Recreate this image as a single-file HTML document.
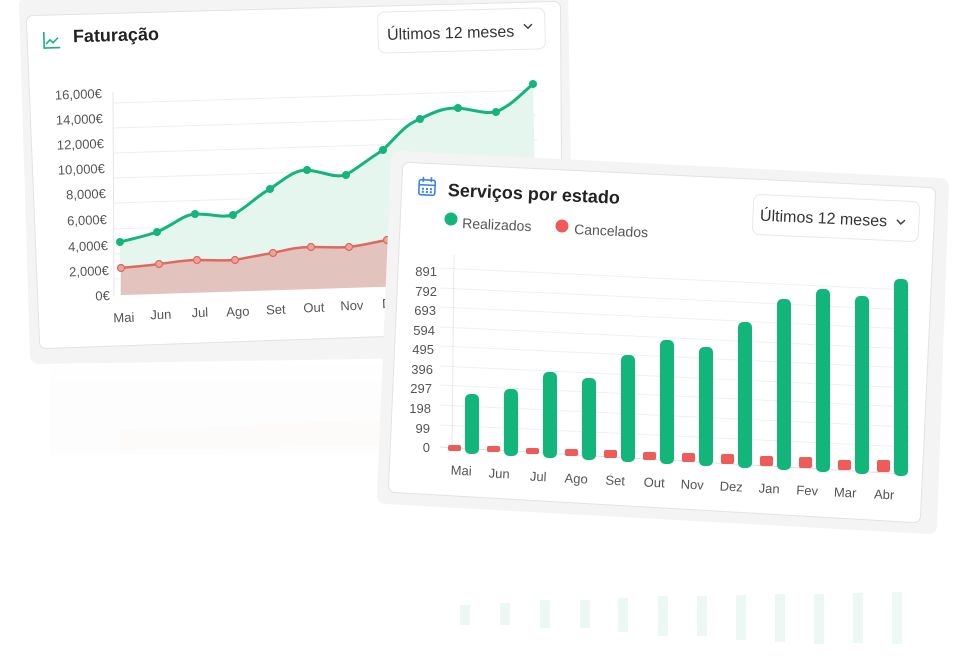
<!DOCTYPE html>
<html><head><meta charset="utf-8"><style>
html,body{margin:0;padding:0;background:#fff;width:957px;height:659px;overflow:hidden}
svg{display:block}
text{font-family:"Liberation Sans",sans-serif}
</style></head><body>
<svg width="957" height="659" viewBox="0 0 957 659" xmlns="http://www.w3.org/2000/svg">
<!-- reflections -->
<g opacity="0.08">
<rect x="50" y="365" width="340" height="90" fill="#eee"/>
<polygon points="120,430 390,420 390,445 120,450" fill="#e9c9c3"/>
<g fill="#12b57a">
<rect x="460" y="605" width="10" height="20"/><rect x="500" y="603" width="10" height="22"/>
<rect x="540" y="600" width="10" height="28"/><rect x="580" y="600" width="10" height="28"/>
<rect x="618" y="598" width="10" height="34"/><rect x="658" y="596" width="10" height="40"/>
<rect x="697" y="596" width="10" height="40"/><rect x="736" y="595" width="10" height="45"/>
<rect x="775" y="594" width="10" height="48"/><rect x="814" y="594" width="10" height="50"/>
<rect x="853" y="593" width="10" height="50"/><rect x="892" y="592" width="10" height="52"/>
</g>
</g>

<!-- Card 1 frame -->
<polygon points="27,5 560,-10 566,348 38,356" fill="#f4f4f4" stroke="#f4f4f4" stroke-width="16" stroke-linejoin="round"/>
<polygon points="33,22 554,8 556,324 46,342" fill="#fff" stroke="#e3e3e3" stroke-width="14" stroke-linejoin="round"/>
<polygon points="33,22 554,8 556,324 46,342" fill="#fff" stroke="#fff" stroke-width="12" stroke-linejoin="round"/>
<!-- title -->
<g transform="rotate(-1.5 44 40)">
<path d="M44 32 V48 H60 M46 44 l4 -4 l3 3 l5 -5" fill="none" stroke="#12b57a" stroke-width="1.6"/>
<text x="73" y="43" font-size="18" font-weight="bold" fill="#222">Faturação</text>
</g>
<!-- dropdown1 -->
<g transform="rotate(-1.5 460 30)">
<rect x="378" y="10" width="167" height="41" rx="7" fill="#fff" stroke="#e8e8e8"/>
<text x="387" y="38" font-size="16" fill="#333">Últimos 12 meses</text>
<path d="M524 26 l4 4 l4 -4" fill="none" stroke="#444" stroke-width="1.5"/>
</g>
<!-- gridlines -->
<g stroke="#eeeeee" stroke-width="1">
<line x1="113" y1="103" x2="537" y2="90"/>
<line x1="113" y1="128" x2="537" y2="115"/>
<line x1="113" y1="153" x2="537" y2="140"/>
<line x1="113" y1="178" x2="537" y2="165"/>
<line x1="113" y1="203" x2="537" y2="190"/>
<line x1="113" y1="229" x2="537" y2="216"/>
<line x1="113" y1="254" x2="537" y2="241"/>
<line x1="113" y1="279" x2="537" y2="266"/>
</g>
<line x1="113" y1="92" x2="114" y2="296" stroke="#e6e6e6"/>
<path d="M120,242 C140,237 145,236 157,232 C175,224 183,215 195,214 C215,214 222,218 233,215 C250,205 258,195 270,189 C287,177 295,170 307,170 C325,172 333,178 346,175 C362,165 370,158 383,150 C400,133 405,125 420,119 C438,110 445,108 458,108 C476,110 484,114 496,112 C512,105 520,95 533,84 L537,282 L120,295 Z" fill="#e5f6ee"/>
<path d="M121,268 L159,264 L197,260 L235,260 L273,253 L311,247 L349,247 L387,240 L420,236 L537,230 L537,282 L121,295 Z" fill="#e2c3bd"/>
<path d="M120,242 C140,237 145,236 157,232 C175,224 183,215 195,214 C215,214 222,218 233,215 C250,205 258,195 270,189 C287,177 295,170 307,170 C325,172 333,178 346,175 C362,165 370,158 383,150 C400,133 405,125 420,119 C438,110 445,108 458,108 C476,110 484,114 496,112 C512,105 520,95 533,84" fill="none" stroke="#12b57a" stroke-width="3"/>
<g fill="#12b57a">
<circle cx="120" cy="242" r="4"/><circle cx="157" cy="232" r="4"/><circle cx="195" cy="214" r="4"/><circle cx="233" cy="215" r="4"/><circle cx="270" cy="189" r="4"/><circle cx="307" cy="170" r="4"/><circle cx="346" cy="175" r="4"/><circle cx="383" cy="150" r="4"/><circle cx="420" cy="119" r="4"/><circle cx="458" cy="108" r="4"/><circle cx="496" cy="112" r="4"/><circle cx="533" cy="84" r="4"/>
</g>
<path d="M121,268 C140,266 145,266 159,264 C175,262 185,260 197,260 C215,260 222,261 235,260 C250,257 260,255 273,253 C290,249 298,247 311,247 C330,247 337,248 349,247 C365,245 375,242 387,240 L420,236" fill="none" stroke="#e0685e" stroke-width="2.5"/>
<g fill="#e9a49d" stroke="#e0685e" stroke-width="1.2">
<circle cx="121" cy="268" r="3.5"/><circle cx="159" cy="264" r="3.5"/><circle cx="197" cy="260" r="3.5"/><circle cx="235" cy="260" r="3.5"/><circle cx="273" cy="253" r="3.5"/><circle cx="311" cy="247" r="3.5"/><circle cx="349" cy="247" r="3.5"/><circle cx="387" cy="240" r="3.5"/>
</g>
<g font-size="13" fill="#555" text-anchor="end">
<text x="102" y="98" transform="rotate(-2 102 98)">16,000€</text>
<text x="103" y="123" transform="rotate(-2 103 123)">14,000€</text>
<text x="104" y="148" transform="rotate(-2 104 148)">12,000€</text>
<text x="105" y="173" transform="rotate(-2 105 173)">10,000€</text>
<text x="106" y="198" transform="rotate(-2 106 198)">8,000€</text>
<text x="107" y="224" transform="rotate(-2 107 224)">6,000€</text>
<text x="108" y="250" transform="rotate(-2 108 250)">4,000€</text>
<text x="109" y="275" transform="rotate(-2 109 275)">2,000€</text>
<text x="110" y="300" transform="rotate(-2 110 300)">0€</text>
</g>
<g font-size="13" fill="#555" text-anchor="middle">
<text x="124" y="322" transform="rotate(-2 124 322)">Mai</text>
<text x="161" y="319" transform="rotate(-2 161 319)">Jun</text>
<text x="200" y="317" transform="rotate(-2 200 317)">Jul</text>
<text x="238" y="316" transform="rotate(-2 238 316)">Ago</text>
<text x="276" y="314" transform="rotate(-2 276 314)">Set</text>
<text x="314" y="312" transform="rotate(-2 314 312)">Out</text>
<text x="352" y="310" transform="rotate(-2 352 310)">Nov</text>
<text x="387" y="308" transform="rotate(-2 387 308)">D</text>
</g>

<!-- Card 2 -->
<polygon points="399,159 941,186 929,526 385,496" fill="#f4f4f4" stroke="#f4f4f4" stroke-width="16" stroke-linejoin="round"/>
<polygon points="409,169 929,194 914,516 395,486" fill="#fff" stroke="#e3e3e3" stroke-width="14" stroke-linejoin="round"/>
<polygon points="409,169 929,194 914,516 395,486" fill="#fff" stroke="#fff" stroke-width="12" stroke-linejoin="round"/>
<g transform="rotate(2.6 427 188)">
<rect x="419" y="180" width="16" height="15" rx="2" fill="none" stroke="#3b82f6" stroke-width="1.6"/>
<line x1="419" y1="185" x2="435" y2="185" stroke="#3b82f6" stroke-width="1.6"/>
<line x1="423" y1="177" x2="423" y2="182" stroke="#3b82f6" stroke-width="1.6"/>
<line x1="431" y1="177" x2="431" y2="182" stroke="#3b82f6" stroke-width="1.6"/>
<g fill="#3b82f6"><rect x="422" y="188" width="2" height="2"/><rect x="426" y="188" width="2" height="2"/><rect x="430" y="188" width="2" height="2"/><rect x="422" y="191" width="2" height="2"/><rect x="426" y="191" width="2" height="2"/><rect x="430" y="191" width="2" height="2"/></g>
<text x="448" y="195" font-size="18" font-weight="bold" fill="#222">Serviços por estado</text>
</g>
<circle cx="451" cy="219" r="6.5" fill="#12b57a"/>
<text x="462" y="228" font-size="14" fill="#555" transform="rotate(2.6 462 228)">Realizados</text>
<circle cx="562" cy="226" r="6.5" fill="#ee5b59"/>
<text x="574" y="234" font-size="14" fill="#555" transform="rotate(2.6 574 234)">Cancelados</text>
<g transform="rotate(2.6 835 218)">
<rect x="753" y="198" width="166" height="40" rx="7" fill="#fff" stroke="#e8e8e8"/>
<text x="760" y="224" font-size="16" fill="#333">Últimos 12 meses</text>
<path d="M897 217 l4 4 l4 -4" fill="none" stroke="#444" stroke-width="1.5"/>
</g>
<g stroke="#f0f0f0">
<line x1="440" y1="268" x2="910" y2="290"/>
<line x1="440" y1="288" x2="910" y2="310"/>
<line x1="440" y1="307" x2="910" y2="329"/>
<line x1="440" y1="327" x2="910" y2="349"/>
<line x1="440" y1="346" x2="910" y2="368"/>
<line x1="440" y1="366" x2="910" y2="388"/>
<line x1="440" y1="385" x2="910" y2="407"/>
<line x1="440" y1="405" x2="910" y2="427"/>
<line x1="440" y1="425" x2="910" y2="447"/>
</g>
<line x1="454" y1="255" x2="452" y2="450" stroke="#e8e8e8"/>
<line x1="440" y1="447" x2="905" y2="474" stroke="#e0e0e0"/>
<g fill="#12b57a">
<rect x="465" y="394" width="14" height="60" rx="5"/>
<rect x="504" y="389" width="14" height="67" rx="5"/>
<rect x="543" y="372" width="14" height="86" rx="5"/>
<rect x="582" y="378" width="14" height="82" rx="5"/>
<rect x="621" y="355" width="14" height="107" rx="5"/>
<rect x="660" y="340" width="14" height="124" rx="5"/>
<rect x="699" y="347" width="14" height="119" rx="5"/>
<rect x="738" y="322" width="14" height="146" rx="5"/>
<rect x="777" y="299" width="14" height="171" rx="5"/>
<rect x="816" y="289" width="14" height="183" rx="5"/>
<rect x="855" y="296" width="14" height="178" rx="5"/>
<rect x="894" y="279" width="14" height="197" rx="5"/>
</g>
<g fill="#ee5b59">
<rect x="448" y="445" width="13" height="6" rx="2"/>
<rect x="487" y="446" width="13" height="6" rx="2"/>
<rect x="526" y="448" width="13" height="6" rx="2"/>
<rect x="565" y="449" width="13" height="7" rx="2"/>
<rect x="604" y="450" width="13" height="8" rx="2"/>
<rect x="643" y="452" width="13" height="8" rx="2"/>
<rect x="682" y="453" width="13" height="9" rx="2"/>
<rect x="721" y="454" width="13" height="10" rx="2"/>
<rect x="760" y="456" width="13" height="10" rx="2"/>
<rect x="799" y="457" width="13" height="11" rx="2"/>
<rect x="838" y="460" width="13" height="10" rx="2"/>
<rect x="877" y="460" width="13" height="12" rx="2"/>
</g>
<g font-size="13" fill="#555" text-anchor="end">
<text x="437" y="276">891</text><text x="437" y="296">792</text><text x="436" y="315">693</text><text x="435" y="335">594</text><text x="434" y="354">495</text><text x="433" y="374">396</text><text x="432" y="393">297</text><text x="431" y="413">198</text><text x="430" y="433">99</text><text x="430" y="452">0</text>
</g>
<g font-size="13" fill="#555" text-anchor="middle">
<text x="461" y="475" transform="rotate(2.6 461 475)">Mai</text>
<text x="499" y="478" transform="rotate(2.6 499 478)">Jun</text>
<text x="538" y="481" transform="rotate(2.6 538 481)">Jul</text>
<text x="576" y="483" transform="rotate(2.6 576 483)">Ago</text>
<text x="615" y="485" transform="rotate(2.6 615 485)">Set</text>
<text x="654" y="487" transform="rotate(2.6 654 487)">Out</text>
<text x="692" y="489" transform="rotate(2.6 692 489)">Nov</text>
<text x="731" y="491" transform="rotate(2.6 731 491)">Dez</text>
<text x="769" y="493" transform="rotate(2.6 769 493)">Jan</text>
<text x="807" y="495" transform="rotate(2.6 807 495)">Fev</text>
<text x="845" y="497" transform="rotate(2.6 845 497)">Mar</text>
<text x="884" y="499" transform="rotate(2.6 884 499)">Abr</text>
</g>
</svg>
</body></html>
